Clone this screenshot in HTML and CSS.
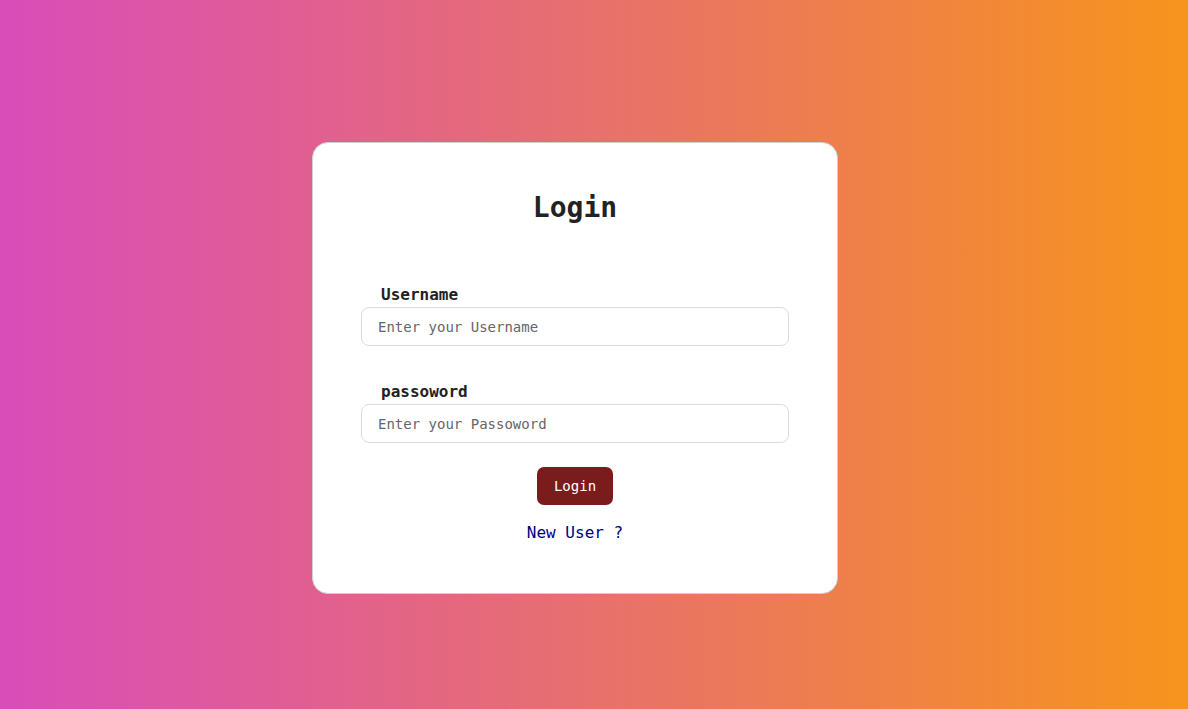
FILE: index.html
```html
<!DOCTYPE html>
<html lang="en">
<head>
<meta charset="utf-8">
<title>Login</title>
<link rel="stylesheet" href="styles.css">
</head>
<body>
<main class="page">
  <form class="card">
    <h1 class="title">Login</h1>
    <div class="field">
      <label class="label" for="username">Username</label>
      <input class="input" id="username" type="text" placeholder="Enter your Username">
    </div>
    <div class="field field-second">
      <label class="label" for="password">passoword</label>
      <input class="input" id="password" type="password" placeholder="Enter your Passoword">
    </div>
    <button class="btn" type="button">Login</button>
    <a class="link" href="#">New User ?</a>
  </form>
</main>
</body>
</html>
```

FILE: styles.css
```css
* { box-sizing: border-box; }
html, body { margin: 0; padding: 0; height: 100%; }
body {
  font-family: "DejaVu Sans Mono", monospace;
  background: linear-gradient(to right, #d84db9, #e8706d 50%, #f7941d);
  overflow: hidden;
}
.page {
  height: 709px;
  padding: 142px 0 0 312px;
}
.card {
  width: 526px;
  background: #fff;
  border: 1px solid #cfcfcf;
  border-radius: 16px;
  padding: 49px 48px 50px;
  display: flex;
  flex-direction: column;
  align-items: center;
}
.title {
  margin: 0;
  font-size: 28px;
  line-height: 32px;
  font-weight: bold;
  color: #222;
}
.field {
  width: 100%;
  display: flex;
  flex-direction: column;
  margin-top: 61px;
}
.field-second { margin-top: 36px; }
.label {
  font-size: 16px;
  line-height: 20px;
  font-weight: bold;
  color: #222;
  padding-left: 20px;
  margin-bottom: 2px;
}
.input {
  width: 100%;
  height: 39px;
  border: 1px solid #dcdce0;
  border-radius: 8px;
  padding: 0 16px;
  font-family: "DejaVu Sans Mono", monospace;
  font-size: 14px;
  color: #222;
  outline: none;
}
.input::placeholder { color: #666; }
.btn {
  margin-top: 24px;
  height: 38px;
  width: 76px;
  padding: 0;
  border: none;
  border-radius: 7px;
  background: #7a1c1c;
  color: #fff;
  font-family: "DejaVu Sans Mono", monospace;
  font-size: 14px;
  line-height: 18px;
}
.link {
  margin-top: 18px;
  font-size: 16px;
  line-height: 20px;
  color: #000080;
  text-decoration: none;
}
```
